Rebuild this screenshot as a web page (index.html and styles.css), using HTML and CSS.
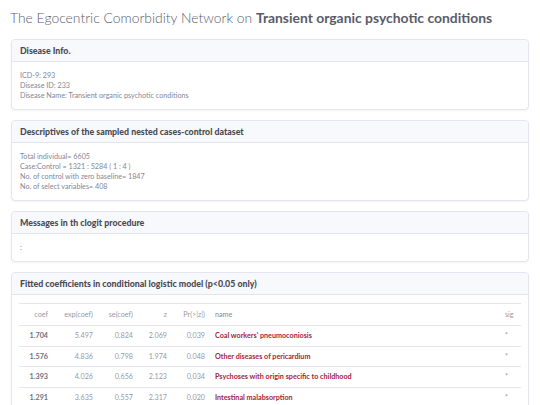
FILE: index.html
```html
<!DOCTYPE html>
<html lang="en">
<head>
    <meta charset="UTF-8">
    <meta name="viewport" content="width=device-width, initial-scale=1">
    <title>Egocentric Comorbidity Network</title>
    <link rel="stylesheet" href="styles.css">
</head>
<body>
    <main class="container">
        <h3 class="page-title">The Egocentric Comorbidity Network on <b>Transient organic psychotic conditions</b></h3>

        <div class="card">
            <div class="card-header">Disease Info.</div>
            <div class="card-body">
                <p>ICD-9: 293</p>
                <p>Disease ID: 233</p>
                <p>Disease Name: Transient organic psychotic conditions</p>
            </div>
        </div>

        <div class="card">
            <div class="card-header">Descriptives of the sampled nested cases-control dataset</div>
            <div class="card-body">
                <p>Total individual= 6605</p>
                <p>Case:Control = 1321 : 5284 ( 1 : 4 )</p>
                <p>No. of control with zero baseline= 1847</p>
                <p>No. of select variables= 408</p>
            </div>
        </div>

        <div class="card">
            <div class="card-header">Messages in th clogit procedure</div>
            <div class="card-body">
                <p>:</p>
            </div>
        </div>

        <div class="card">
            <div class="card-header">Fitted coefficients in conditional logistic model (p&lt;0.05 only)</div>
            <div class="card-body table-body">
                <table class="coef-table">
                    <colgroup>
                        <col class="c-coef">
                        <col class="c-exp">
                        <col class="c-se">
                        <col class="c-z">
                        <col class="c-p">
                        <col>
                        <col class="c-sig">
                    </colgroup>
                    <thead>
                        <tr>
                            <th class="num">coef</th>
                            <th class="num">exp(coef)</th>
                            <th class="num">se(coef)</th>
                            <th class="num">z</th>
                            <th class="num">Pr(&gt;|z|)</th>
                            <th class="name">name</th>
                            <th class="sig">sig</th>
                        </tr>
                    </thead>
                    <tbody>
                        <tr>
                            <td class="num strong">1.704</td>
                            <td class="num">5.497</td>
                            <td class="num">0.824</td>
                            <td class="num">2.069</td>
                            <td class="num">0.039</td>
                            <td class="name"><a href="#">Coal workers' pneumoconiosis</a></td>
                            <td class="sig">*</td>
                        </tr>
                        <tr>
                            <td class="num strong">1.576</td>
                            <td class="num">4.836</td>
                            <td class="num">0.798</td>
                            <td class="num">1.974</td>
                            <td class="num">0.048</td>
                            <td class="name"><a href="#">Other diseases of pericardium</a></td>
                            <td class="sig">*</td>
                        </tr>
                        <tr>
                            <td class="num strong">1.393</td>
                            <td class="num">4.026</td>
                            <td class="num">0.656</td>
                            <td class="num">2.123</td>
                            <td class="num">0.034</td>
                            <td class="name"><a href="#">Psychoses with origin specific to childhood</a></td>
                            <td class="sig">*</td>
                        </tr>
                        <tr>
                            <td class="num strong">1.291</td>
                            <td class="num">3.635</td>
                            <td class="num">0.557</td>
                            <td class="num">2.317</td>
                            <td class="num">0.020</td>
                            <td class="name"><a href="#">Intestinal malabsorption</a></td>
                            <td class="sig">*</td>
                        </tr>
                    </tbody>
                </table>
            </div>
        </div>
    </main>
</body>
</html>
```

FILE: styles.css
```css
body {
    font-family: 'Lato', 'Open Sans', sans-serif;
    font-size: 7.2px;
    color: #858796;
    background-color: white;
    margin: 0;
    padding: 0;
}
a {
    color: #a3243b;
    text-decoration: none;
    font-weight: bold;
}
.container {
    padding: 0 11px;
}
.page-title {
    font-size: 13.9px;
    font-weight: 300;
    color: #5a5c69;
    margin: 0 0 0 -1px;
    padding: 8px 0 11px 0;
    line-height: 20px;
    white-space: nowrap;
}
.page-title b {
    font-weight: 700;
}
.card {
    border: 1px solid #e3e6f0;
    border-radius: 4px;
    background-color: white;
    box-shadow: 0 1px 2px rgba(58, 59, 69, 0.06);
    margin-bottom: 10px;
    overflow: hidden;
}
.card-header {
    background-color: #f8f9fc;
    border-bottom: 1px solid #e3e6f0;
    font-size: 8.8px;
    font-weight: 900;
    color: #4a4b55;
    height: 21px;
    line-height: 21px;
    padding: 0 8px;
}
.card-body {
    padding: 9px 8px 8px 8px;
}
.card-body p {
    margin: 0;
    line-height: 10px;
}
.table-body {
    padding: 8px 7px 0 7px;
}
.coef-table {
    width: 100%;
    table-layout: fixed;
    border-collapse: collapse;
    font-size: 7.2px;
}
.c-coef { width: 33px; }
.c-exp { width: 45px; }
.c-se { width: 40px; }
.c-z { width: 34px; }
.c-p { width: 38px; }
.c-sig { width: 20px; }
.coef-table th {
    font-weight: normal;
    height: 21px;
    border-top: 1px solid #e3e6f0;
    border-bottom: 1px solid #e3e6f0;
}
.coef-table td {
    height: 19.5px;
    border-bottom: 1px solid #e3e6f0;
}
.coef-table th, .coef-table td {
    padding: 0 4px;
    white-space: nowrap;
}
.coef-table .num {
    text-align: right;
    color: #999aa6;
}
.coef-table .strong {
    color: #6e707e;
    font-weight: bold;
}
.coef-table .name {
    text-align: left;
    padding-left: 6px;
}
.coef-table .sig {
    text-align: left;
    color: #999aa6;
}
```
